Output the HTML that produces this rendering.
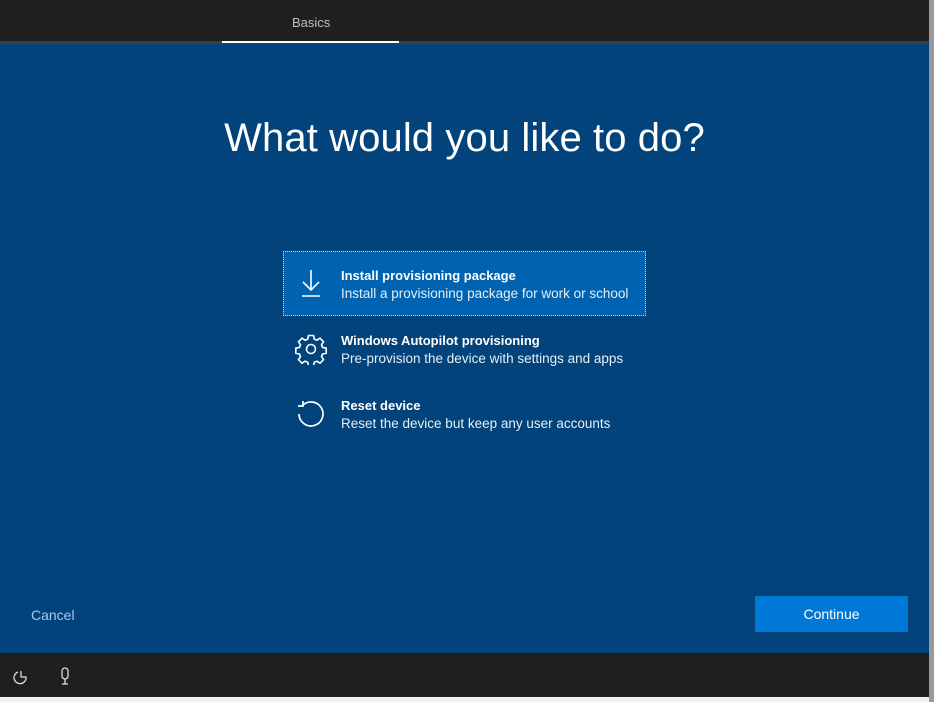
<!DOCTYPE html>
<html><head><meta charset="utf-8"><style>
*{margin:0;padding:0;box-sizing:border-box}
body{width:934px;height:702px;background:#f0f0f0;font-family:"Liberation Sans",sans-serif;position:relative;overflow:hidden}
#top{position:absolute;left:0;top:0;width:929px;height:42px;background:#1f1f1f}
#top span{position:absolute;left:292px;top:15px;color:#bdbdbd;font-size:13px}
#line{position:absolute;left:0;top:41px;width:929px;height:3px;background:#3a3f46}
#ul{position:absolute;left:222px;top:41px;width:177px;height:2px;background:#fff}
#main{position:absolute;left:0;top:44px;width:929px;height:609px;background:#01437a}
h1{position:absolute;left:0;width:929px;top:116px;text-align:center;color:#fff;font-weight:normal;font-size:40px;letter-spacing:0.1px}
.item{position:absolute;left:283px;width:363px;height:65px;color:#fff}
.item.sel{background:#0063b1;border:1px dotted #cfd8e3}
.item b{position:absolute;left:58px;top:17px;font-size:13px}
.item i{position:absolute;left:58px;top:35px;font-size:13.5px;font-style:normal;color:#e6eef6}
.item.sel b{left:57px;top:16px}
.item.sel i{left:57px;top:34px}
.item svg{position:absolute;left:13px;top:17px}
#cancel{position:absolute;left:31px;top:607px;color:#a8c8ee;font-size:14px}
#cont{position:absolute;left:755px;top:596px;width:153px;height:36px;background:#0078d7;color:#fff;font-size:14px;text-align:center;line-height:36px}
#bot{position:absolute;left:0;top:653px;width:929px;height:44px;background:#1f1f1f}
#edge{position:absolute;left:929px;top:0;width:5px;height:702px;background:#9a9a9a}
</style></head><body>
<div id="top"><span>Basics</span></div>
<div id="line"></div><div id="ul"></div>
<div id="main"></div>
<h1>What would you like to do?</h1>
<div class="item sel" style="top:251px">
<svg width="30" height="30" viewBox="0 0 30 30" fill="none" stroke="#fff" stroke-width="1.6" style="left:12px;top:16px"><path d="M15 2V22M7 14L15 22L23 14M6 28H24"/></svg>
<b>Install provisioning package</b><i>Install a provisioning package for work or school</i></div>
<div class="item" style="top:316px">
<svg width="32" height="32" viewBox="0 0 32 32" fill="none" stroke="#fff" stroke-width="1.6" style="left:12px;top:17px"><circle cx="16" cy="16" r="4.5"/><path d="M13.5 2.5h5l.8 3.6 2.6 1.1 3.1-2 3.5 3.5-2 3.1 1.1 2.6 3.6.8v5l-3.6.8-1.1 2.6 2 3.1-3.5 3.5-3.1-2-2.6 1.1-.8 3.6h-5l-.8-3.6-2.6-1.1-3.1 2-3.5-3.5 2-3.1-1.1-2.6-3.6-.8v-5l3.6-.8 1.1-2.6-2-3.1 3.5-3.5 3.1 2 2.6-1.1z"/></svg>
<b>Windows Autopilot provisioning</b><i>Pre-provision the device with settings and apps</i></div>
<div class="item" style="top:381px">
<svg width="32" height="32" viewBox="0 0 32 32" fill="none" stroke="#fff" stroke-width="1.7" style="left:12px;top:17px"><path d="M7 8A12 12 0 1 1 4 16"/><path d="M3 8H8V3"/></svg>
<b>Reset device</b><i>Reset the device but keep any user accounts</i></div>
<div id="cancel">Cancel</div>
<div id="cont">Continue</div>
<div id="bot">
<svg style="position:absolute;left:13px;top:16px" width="16" height="16" viewBox="0 0 16 16" fill="none" stroke="#ddd" stroke-width="1.3"><path d="M5 3A6 6 0 1 0 13 8H8V2"/></svg>
<svg style="position:absolute;left:59px;top:14px" width="12" height="18" viewBox="0 0 12 18" fill="none" stroke="#ddd" stroke-width="1.3"><rect x="3" y="1" width="6" height="11" rx="3"/><path d="M6 12v5M3 17h6"/></svg>
</div>
<div id="edge"></div>
</body></html>
